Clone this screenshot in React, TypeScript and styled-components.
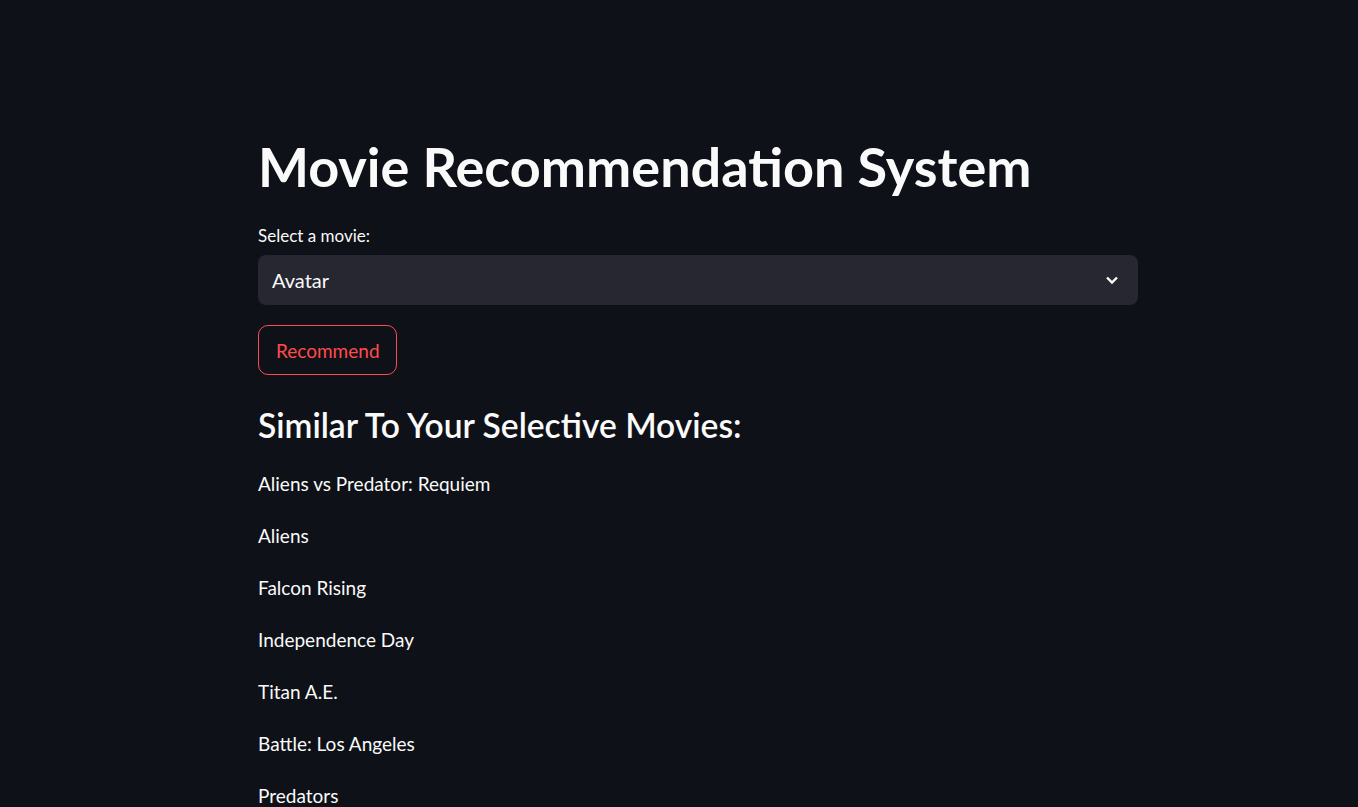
import React from 'react';
import styled, { createGlobalStyle } from 'styled-components';

const GlobalStyle = createGlobalStyle`
  html, body {
    margin: 0;
    padding: 0;
    background: #0e1117;
    color: #fafafa;
    font-family: Lato, "Noto Sans", sans-serif;
  }
`;

const Main = styled.main`
  min-height: 807px;
  box-sizing: border-box;
  padding: 136px 220px 0 258px;
  overflow: hidden;
`;

const Block = styled.div`
  display: flex;
  flex-direction: column;
`;

const Title = styled.h1`
  margin: 0;
  font-size: 54px;
  line-height: 62px;
  font-weight: 700;
`;

const Label = styled.label`
  margin-top: 26px;
  font-size: 17px;
  line-height: 24px;
`;

const SelectBox = styled.div`
  margin-top: 7px;
  height: 50px;
  border-radius: 8px;
  background: #262730;
  display: flex;
  align-items: center;
  justify-content: space-between;
  padding: 0 19px 0 14px;
  font-size: 20px;
`;

const Button = styled.button`
  margin-top: 20px;
  align-self: flex-start;
  height: 50px;
  padding: 0 16px 0 17px;
  border: 1px solid #ff4b4b;
  border-radius: 10px;
  background: transparent;
  color: #ff4b4b;
  font-family: inherit;
  font-size: 19px;
`;

const Subheader = styled.h3`
  margin: 29px 0 0;
  font-size: 33.6px;
  line-height: 42px;
  font-weight: 600;
`;

const List = styled.div`
  margin-top: 22px;
  display: flex;
  flex-direction: column;
  gap: 20px;
`;

const Item = styled.p`
  margin: 0;
  font-size: 19px;
  line-height: 32px;
`;

const movies = [
  'Aliens vs Predator: Requiem',
  'Aliens',
  'Falcon Rising',
  'Independence Day',
  'Titan A.E.',
  'Battle: Los Angeles',
  'Predators',
];

export default function App() {
  return (
    <>
      <GlobalStyle />
      <Main>
        <Block>
          <Title>Movie Recommendation System</Title>
          <Label>Select a movie:</Label>
          <SelectBox>
            <span>Avatar</span>
            <svg width="14" height="10" viewBox="0 0 14 10" fill="none">
              <path d="M2 2.5l5 5 5-5" stroke="#fafafa" strokeWidth="2.4" />
            </svg>
          </SelectBox>
          <Button>Recommend</Button>
          <Subheader>Similar To Your Selective Movies:</Subheader>
          <List>
            {movies.map((m) => (
              <Item key={m}>{m}</Item>
            ))}
          </List>
        </Block>
      </Main>
    </>
  );
}
